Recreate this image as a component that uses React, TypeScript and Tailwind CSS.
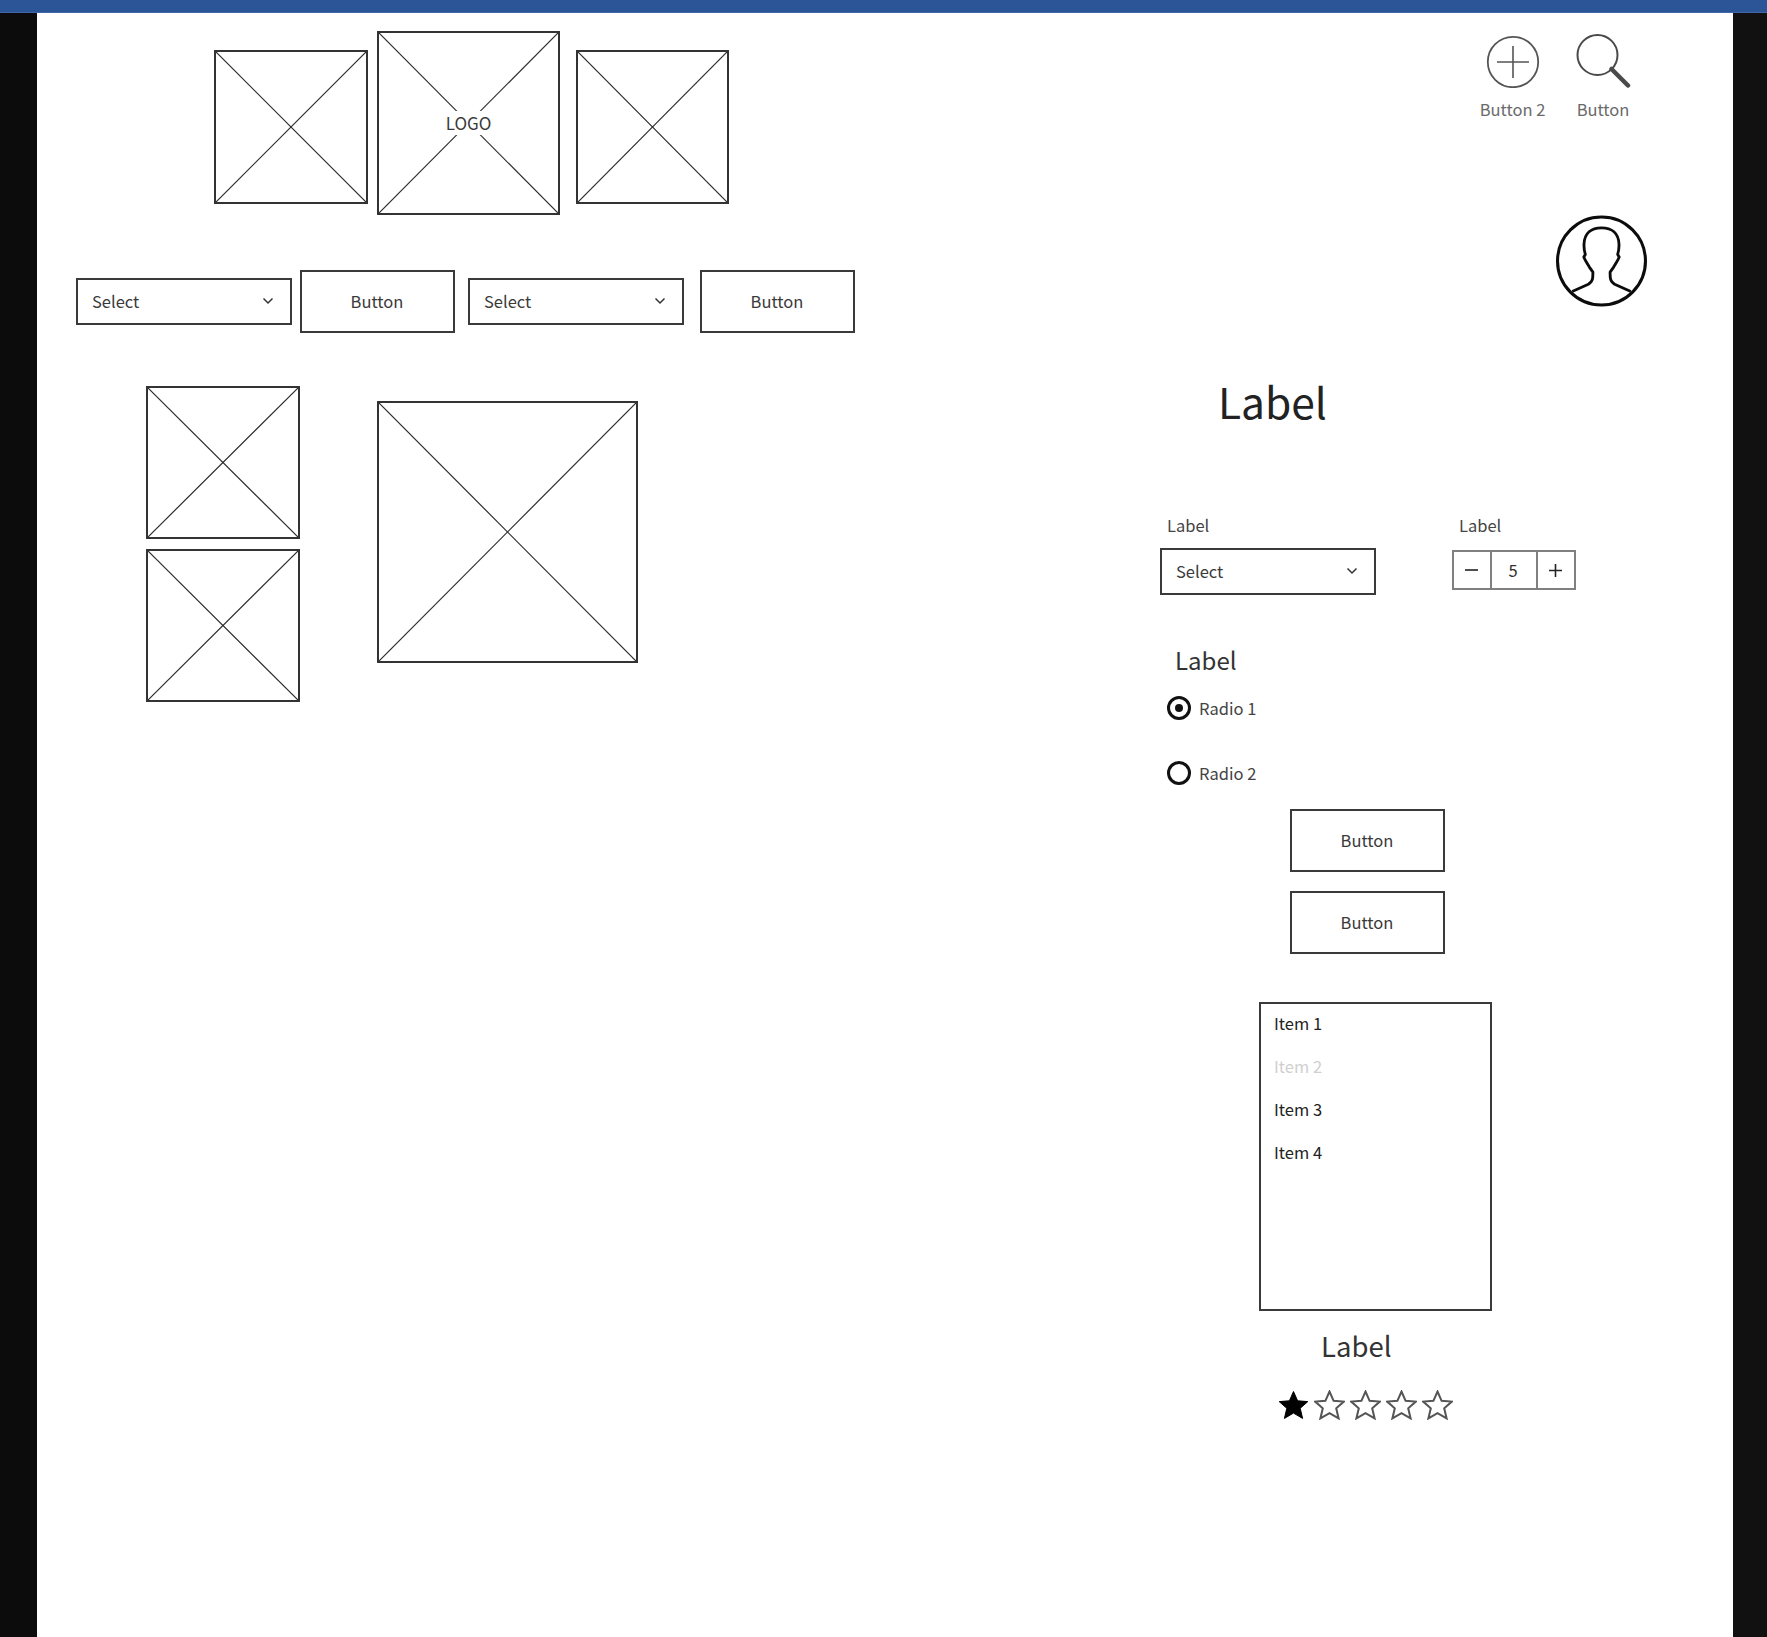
const FONT = '"Noto Sans CJK JP", "Noto Sans", sans-serif';

function XBox({ className, children }: { className: string; children?: React.ReactNode }) {
  return (
    <div className={`relative shrink-0 border-2 border-[#333333] bg-white ${className}`}>
      <svg className="absolute inset-0 h-full w-full" viewBox="0 0 100 100" preserveAspectRatio="none">
        <line x1="0" y1="0" x2="100" y2="100" stroke="#2a2a2a" strokeWidth="1.2" vectorEffect="non-scaling-stroke" />
        <line x1="100" y1="0" x2="0" y2="100" stroke="#2a2a2a" strokeWidth="1.2" vectorEffect="non-scaling-stroke" />
      </svg>
      {children}
    </div>
  );
}

function Chevron() {
  return (
    <svg width="12" height="8" viewBox="0 0 12 8" fill="none" className="mb-[2px]">
      <path d="M1.5 1.5 L6 6 L10.5 1.5" stroke="#333" strokeWidth="1.5" />
    </svg>
  );
}

function SelectBox() {
  return (
    <div className="flex h-[47px] w-[216px] shrink-0 items-center justify-between border-2 border-[#3a3a3a] bg-white pl-[14px] pr-[16px] text-[16.5px] text-[#3a3a3a]">
      <span className="-mt-[1px]">Select</span>
      <Chevron />
    </div>
  );
}

function Btn() {
  return (
    <div className="flex h-[63px] w-[155px] shrink-0 items-center justify-center border-2 border-[#3a3a3a] bg-white pb-[1px] pr-[1px] text-[16.5px] text-[#3a3a3a]">
      Button
    </div>
  );
}

function Radio({ on, label, className }: { on?: boolean; label: string; className: string }) {
  return (
    <div className={`flex h-[24px] items-center gap-[8px] pl-[7px] text-[16.5px] leading-[24px] text-[#444] ${className}`}>
      <span className="flex h-[24px] w-[24px] items-center justify-center rounded-full border-[3px] border-[#111]">
        {on && <span className="h-[8px] w-[8px] rounded-full bg-[#111]" />}
      </span>
      <span>{label}</span>
    </div>
  );
}

function Star({ filled }: { filled?: boolean }) {
  return (
    <svg width="31" height="30" viewBox="0 0 31 30" className="shrink-0">
      <polygon
        points="15.5,1.5 19.6,10.8 29.8,11.6 22.2,18.3 24.6,28.4 15.5,23.1 6.4,28.4 8.8,18.3 1.2,11.6 11.4,10.8"
        fill={filled ? "#000" : "#fff"}
        stroke={filled ? "#000" : "#555"}
        strokeWidth={filled ? 1 : 2}
        strokeLinejoin="miter"
      />
    </svg>
  );
}

export default function App() {
  return (
    <div className="flex min-h-[1637px] flex-col bg-[#0e0e0e]" style={{ fontFamily: FONT }}>
      <div className="h-[13px] shrink-0 border-b border-[#3f68a8] bg-[#2b5597]" />
      <div className="flex h-[1624px]">
        <div className="w-[37px] shrink-0 bg-[#0c0c0c]" />
        <div className="flex flex-1 bg-white">
          {/* left column */}
          <div className="w-[1123px] shrink-0">
            <div className="ml-[177px] mt-[18px] flex items-start">
              <XBox className="mt-[19px] h-[154px] w-[154px]" />
              <XBox className="ml-[9px] h-[184px] w-[183px]">
                <div className="absolute left-1/2 top-1/2 -translate-x-1/2 -translate-y-1/2 bg-white px-[1px] text-[17px] leading-[24px] text-[#3a3a3a]">
                  LOGO
                </div>
              </XBox>
              <XBox className="ml-[16px] mt-[19px] h-[154px] w-[153px]" />
            </div>
            <div className="ml-[39px] mt-[55px] flex items-center">
              <SelectBox />
              <div className="ml-[8px]"><Btn /></div>
              <div className="ml-[13px]"><SelectBox /></div>
              <div className="ml-[16px]"><Btn /></div>
            </div>
            <div className="ml-[109px] mt-[53px] flex items-start">
              <div className="flex flex-col gap-[10px]">
                <XBox className="h-[153px] w-[154px]" />
                <XBox className="h-[153px] w-[154px]" />
              </div>
              <XBox className="ml-[77px] mt-[15px] h-[262px] w-[261px]" />
            </div>
          </div>

          {/* right column */}
          <div className="flex-1">
            <div className="ml-[320px] mt-[21px] flex gap-[32px] text-[16.5px] leading-[24px] text-[#6a6a6a]">
              <div className="flex w-[65px] flex-col items-center">
                <svg width="54" height="54" viewBox="0 0 54 54" fill="none">
                  <circle cx="27" cy="28" r="25.2" stroke="#555" strokeWidth="1.8" />
                  <path d="M11 28 H43 M27 12 V44" stroke="#555" strokeWidth="1.6" />
                </svg>
                <span className="mt-[9px] whitespace-nowrap">Button 2</span>
              </div>
              <div className="flex w-[52px] flex-col items-center">
                <svg width="55" height="54" viewBox="0 0 55 54" fill="none" className="ml-[1px]">
                  <circle cx="21.5" cy="21" r="20" stroke="#4a4a4a" strokeWidth="2" />
                  <path d="M35.5 35 L52 51.5" stroke="#4a4a4a" strokeWidth="4.5" strokeLinecap="round" />
                </svg>
                <span className="mt-[9px]">Button</span>
              </div>
            </div>

            <svg className="ml-[396px] mt-[94px] block" width="91" height="92" viewBox="0 0 90 91" fill="none">
              <circle cx="45" cy="45.5" r="43.5" stroke="#0c0c0c" strokeWidth="3" />
              <path
                d="M16 75.7 L32 68.5 Q36 66 36.3 62 Q36.5 59 36.5 56.5 L33 51.5 L30 46.5 Q28.5 44 27.5 41.5 L29 39 Q27.5 34 27.7 29 C28 18 35 12.7 45 12.7 C55 12.7 62 18 62.3 29 Q62.5 34 61 39 L62.5 41.5 Q61.5 44 60 46.5 L57 51.5 L53.5 56.5 Q53.5 59 53.7 62 Q54 66 58 68.5 L74 75.7"
                stroke="#0c0c0c"
                strokeWidth="2.8"
                strokeLinejoin="round"
              />
            </svg>

            <div className="ml-[58px] mt-[64px] text-[42.5px] leading-[60px] text-[#222]">Label</div>

            <div className="mt-[82px] flex">
              <div className="w-[216px]">
                <div className="pl-[7px] text-[16.5px] leading-[24px] text-[#444]">Label</div>
                <div className="mt-[11px]"><SelectBox /></div>
              </div>
              <div className="ml-[76px]">
                <div className="pl-[7px] text-[16.5px] leading-[24px] text-[#444]">Label</div>
                <div className="mt-[13px] flex h-[40px] w-[124px] items-stretch border-2 border-[#808080] text-[16.5px] text-[#333]">
                  <div className="flex w-[38px] items-center justify-center border-r-2 border-[#808080] pr-[2px]">
                    <svg width="13" height="2" viewBox="0 0 13 2"><path d="M0 1 H13" stroke="#222" strokeWidth="1.6" /></svg>
                  </div>
                  <div className="flex w-[46px] items-center justify-center border-r-2 border-[#808080] pr-[2px]">5</div>
                  <div className="flex flex-1 items-center justify-center pr-[2px]">
                    <svg width="13" height="13" viewBox="0 0 13 13"><path d="M0 6.5 H13 M6.5 0 V13" stroke="#222" strokeWidth="1.6" /></svg>
                  </div>
                </div>
              </div>
            </div>

            <div className="ml-[15px] mt-[47px] text-[24px] leading-[36px] text-[#333]">Label</div>
            <Radio on label="Radio 1" className="mt-[18px]" />
            <Radio label="Radio 2" className="mt-[41px]" />

            <div className="ml-[130px] mt-[24px]">
              <Btn />
            </div>
            <div className="ml-[130px] mt-[19px]">
              <Btn />
            </div>

            <div className="ml-[99px] mt-[48px] h-[309px] w-[233px] border-2 border-[#3a3a3a] pl-[13px] text-[16.5px] leading-[43px] text-[#222]">
              <div className="-mt-[2px]">Item 1</div>
              <div className="text-[#cfcfcf]">Item 2</div>
              <div>Item 3</div>
              <div>Item 4</div>
            </div>

            <div className="ml-[161px] mt-[14px] text-[27.5px] leading-[40px] text-[#333]">Label</div>

            <div className="ml-[118px] mt-[25px] flex gap-[5px]">
              <Star filled />
              <Star />
              <Star />
              <Star />
              <Star />
            </div>
          </div>
        </div>
        <div className="w-[34px] shrink-0 bg-[#111111]" />
      </div>
    </div>
  );
}
